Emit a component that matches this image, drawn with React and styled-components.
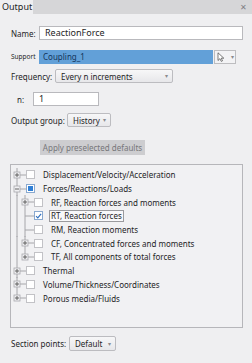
import React from "react";
import styled, { createGlobalStyle } from "styled-components";

const GlobalStyle = createGlobalStyle`
  body {
    margin: 0;
    background: #efeff1;
    font-family: "Segoe UI", "Noto Sans", sans-serif;
    color: #242426;
  }
`;

const Panel = styled.div`
  width: 252px;
  height: 363px;
  background: #efeff1;
  display: flex;
  flex-direction: column;
  overflow: hidden;
`;

const TabBar = styled.div`
  height: 14px;
  background: #d6d6d8;
  display: flex;
  align-items: stretch;
`;

const Tab = styled.div`
  background: #efeff1;
  font-size: 9px;
  line-height: 14px;
  padding: 0 3px 0 2px;
  width: 28px;
`;

const Close = styled.div`
  margin-left: auto;
  margin-right: 5px;
  font-size: 8px;
  line-height: 13px;
  color: #808084;
`;

const Form = styled.div`
  padding: 0 9px 0 11px;
  display: flex;
  flex-direction: column;
`;

const Row = styled.div`
  display: flex;
  align-items: center;
  height: ${(p) => p.$h || 14}px;
  margin-top: ${(p) => p.$top}px;
`;

const Label = styled.span`
  font-size: ${(p) => (p.$small ? 6.5 : 8)}px;
  width: ${(p) => p.$w}px;
  padding-left: ${(p) => p.$indent || 0}px;
  box-sizing: border-box;
  flex-shrink: 0;
  white-space: nowrap;
`;

const TextInput = styled.div`
  height: 14px;
  box-sizing: border-box;
  width: ${(p) => (p.$w ? `${p.$w}px` : "auto")};
  flex: ${(p) => (p.$w ? "none" : "1")};
  background: #fff;
  border: 1px solid #b9b9bd;
  font-size: 9px;
  line-height: 12px;
  padding-left: 5px;
`;

const Selected = styled.div`
  flex: 1;
  height: 14px;
  background: #62a0d8;
  font-size: 8px;
  line-height: 14px;
  padding-left: 4px;
  color: #12345a;
`;

const PickButton = styled.div`
  width: 17px;
  height: 12px;
  margin-left: 1px;
  margin-right: 7px;
  border: 1px solid #bdbdc0;
  background: #f3f3f5;
  display: flex;
  align-items: center;
  justify-content: space-between;
  padding: 0 1px 0 2px;
`;

const Combo = styled.div`
  width: ${(p) => p.$w}px;
  height: ${(p) => p.$h || 14}px;
  box-sizing: border-box;
  border: 1px solid #bcbcc0;
  border-radius: 2px;
  background: linear-gradient(#f7f7f8, #e7e7ea);
  display: flex;
  align-items: center;
  justify-content: space-between;
  padding: 0 4px 0 5px;
  font-size: 8px;
`;

const Arrow = styled.span`
  font-size: 6px;
  color: #8a8a8e;
`;

const ApplyButton = styled.div`
  margin-left: 29px;
  width: 105px;
  height: 15px;
  background: #cdcdd0;
  color: #76767a;
  font-size: 8px;
  line-height: 15px;
  text-align: center;
`;

const TreeBox = styled.div`
  margin: 9px 9px 0 10px;
  height: 164px;
  box-sizing: border-box;
  border: 1px solid #b6b6ba;
  background: #f1f1f3;
  padding: 3px 0 0 0;
  display: flex;
  flex-direction: column;
`;

const TreeRow = styled.div`
  display: flex;
  align-items: center;
  height: 13.7px;
`;

const Check = styled.span`
  width: 9px;
  height: 9px;
  box-sizing: border-box;
  border: 1px solid ${(p) => (p.$state ? "#8aa9cf" : "#c2c2c6")};
  background: #fff;
  flex-shrink: 0;
  display: flex;
  align-items: center;
  justify-content: center;
`;

const Partial = styled.span`
  width: 5px;
  height: 5px;
  background: #2f7fd6;
`;

const ItemText = styled.span`
  font-size: 8px;
  margin-left: ${(p) => (p.$focus ? 6 : 8)}px;
  white-space: nowrap;
  ${(p) =>
    p.$focus &&
    `border: 1px solid #9a9a9e; background: #f8f8fa; padding: 0 1px; line-height: 10px;`}
`;

function Guide({ level, expander, last }) {
  const w = level === 0 ? 15 : 23;
  const line = "#a6a6aa";
  const ex = level === 0 ? 6 : 14;
  return (
    <svg width={w} height="14" style={{ flexShrink: 0 }}>
      {level === 0 ? (
        <line x1="6" y1={0} x2="6" y2={last ? 7 : 14} stroke={line} strokeWidth="1" />
      ) : (
        <>
          <line x1="6" y1="0" x2="6" y2="14" stroke={line} strokeWidth="1" />
          <line x1="14" y1="0" x2="14" y2={last ? 7 : 14} stroke={line} strokeWidth="1" />
        </>
      )}
      <line x1={ex} y1="7" x2={w} y2="7" stroke={line} strokeWidth="1" />
      {expander && (
        <>
          <rect x={ex - 3} y="4" width="6" height="6" fill="#f1f1f3" stroke="#a8a8ac" strokeWidth="0.8" />
          <line x1={ex - 2} y1="7" x2={ex + 2} y2="7" stroke="#555" strokeWidth="0.9" />
          {expander === "+" && (
            <line x1={ex} y1="5" x2={ex} y2="9" stroke="#555" strokeWidth="0.9" />
          )}
        </>
      )}
    </svg>
  );
}

const items = [
  { level: 0, text: "Displacement/Velocity/Acceleration", exp: "+" },
  { level: 0, text: "Forces/Reactions/Loads", exp: "-", state: "partial" },
  { level: 1, text: "RF, Reaction forces and moments", exp: "+" },
  { level: 1, text: "RT, Reaction forces", state: "checked", focus: true },
  { level: 1, text: "RM, Reaction moments" },
  { level: 1, text: "CF, Concentrated forces and moments", exp: "+" },
  { level: 1, text: "TF, All components of total forces", exp: "+", last: true },
  { level: 0, text: "Thermal", exp: "+" },
  { level: 0, text: "Volume/Thickness/Coordinates", exp: "+" },
  { level: 0, text: "Porous media/Fluids", exp: "+", last: true },
];

export default function App() {
  return (
    <Panel>
      <GlobalStyle />
      <TabBar>
        <Tab>Output</Tab>
        <Close>✕</Close>
      </TabBar>
      <Form>
        <Row $top={12}>
          <Label $w={28}>Name:</Label>
          <TextInput>ReactionForce</TextInput>
        </Row>
        <Row $top={9} $h={15}>
          <Label $w={28} $small>Support</Label>
          <Selected>Coupling_1</Selected>
          <PickButton>
            <svg width="8" height="10" viewBox="0 0 8 10">
              <path d="M1 0.8 L1 8.5 L2.9 6.7 L4.3 9.4 L5.5 8.8 L4.2 6.2 L6.8 6.2 Z" fill="#fff" stroke="#444" strokeWidth="0.7" />
            </svg>
            <Arrow>▾</Arrow>
          </PickButton>
        </Row>
        <Row $top={5}>
          <Label $w={44}>Frequency:</Label>
          <Combo $w={118}>
            Every n increments <Arrow>▾</Arrow>
          </Combo>
        </Row>
        <Row $top={9}>
          <Label $w={22} $indent={6}>n:</Label>
          <TextInput $w={66}>1</TextInput>
        </Row>
        <Row $top={7}>
          <Label $w={56}>Output group:</Label>
          <Combo $w={44}>
            History <Arrow>▾</Arrow>
          </Combo>
        </Row>
        <Row $top={13} $h={15}>
          <ApplyButton>Apply preselected defaults</ApplyButton>
        </Row>
      </Form>
      <TreeBox>
        {items.map((it) => (
          <TreeRow key={it.text}>
            <Guide level={it.level} expander={it.exp} last={it.last} />
            <Check $state={it.state}>
              {it.state === "partial" && <Partial />}
              {it.state === "checked" && (
                <svg width="8" height="8" viewBox="0 0 8 8">
                  <path d="M1.2 4.2 L3.2 6.2 L7 1.6" fill="none" stroke="#2f6fbf" strokeWidth="1.3" />
                </svg>
              )}
            </Check>
            <ItemText $focus={it.focus}>{it.text}</ItemText>
          </TreeRow>
        ))}
      </TreeBox>
      <Form>
        <Row $top={8} $h={15}>
          <Label $w={58}>Section points:</Label>
          <Combo $w={47} $h={15}>
            Default <Arrow>▾</Arrow>
          </Combo>
        </Row>
      </Form>
    </Panel>
  );
}
